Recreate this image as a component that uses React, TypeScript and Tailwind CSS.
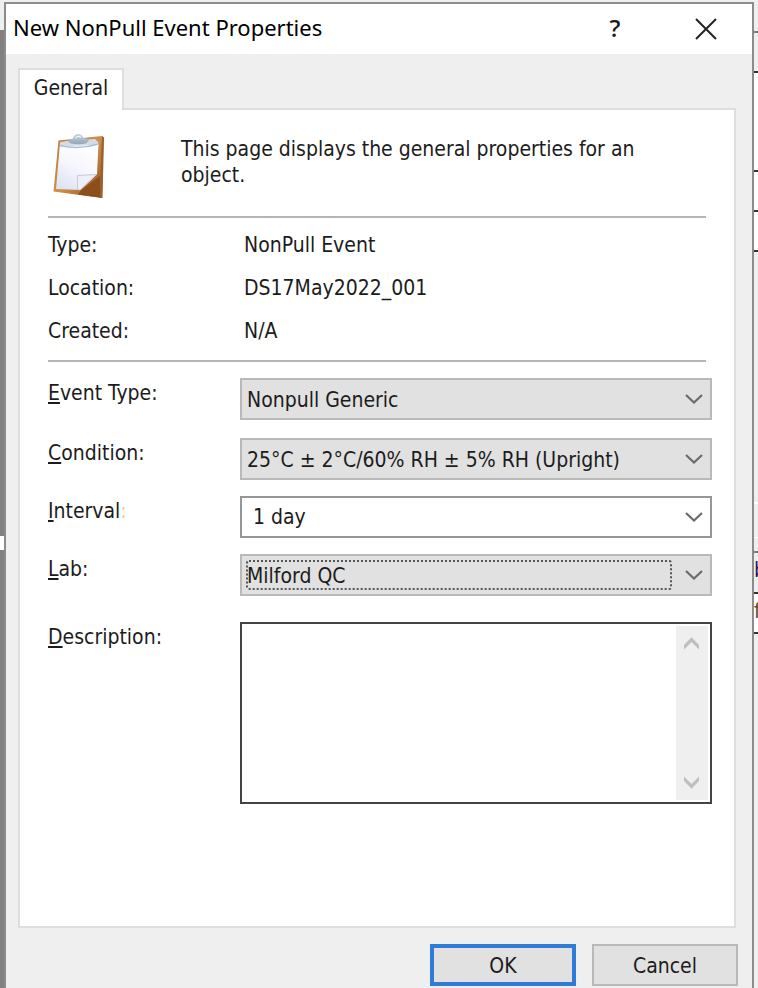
import React from "react";

const textFont = "font-['DejaVu_Sans_Condensed','Noto_Sans',sans-serif]";

function Chevron({ className = "" }: { className?: string }) {
  return (
    <svg
      viewBox="0 0 18 10"
      className={`pointer-events-none h-[10px] w-[18px] ${className}`}
      fill="none"
      stroke="#6b6b6b"
      strokeWidth="2.2"
      aria-hidden="true"
    >
      <path d="M1 1l8 7.5L17 1" />
    </svg>
  );
}

function ScrollArrow({ down = false }: { down?: boolean }) {
  return (
    <svg viewBox="0 0 15 13" className="h-[13px] w-[15px]" fill="#bfbfbf" aria-hidden="true">
      {down ? (
        <path d="M0 0.5L7.5 8L15 0.5V5L7.5 12.8L0 5Z" />
      ) : (
        <path d="M0 12.5L7.5 5L15 12.5V8L7.5 0.2L0 8Z" />
      )}
    </svg>
  );
}

function Clipboard() {
  return (
    <svg viewBox="0 0 54 66" className="h-[66px] w-[54px]" aria-hidden="true">
      <defs>
        <linearGradient id="board" x1="0" y1="0" x2="1" y2="1">
          <stop offset="0" stopColor="#b9793c" />
          <stop offset="0.5" stopColor="#cf8f4c" />
          <stop offset="1" stopColor="#8a4d1c" />
        </linearGradient>
        <linearGradient id="sheet" x1="0.7" y1="0" x2="0.2" y2="1">
          <stop offset="0" stopColor="#ffffff" />
          <stop offset="0.5" stopColor="#f6f6fd" />
          <stop offset="1" stopColor="#dde3f2" />
        </linearGradient>
        <linearGradient id="clip" x1="0" y1="0" x2="0" y2="1">
          <stop offset="0" stopColor="#c9d3de" />
          <stop offset="1" stopColor="#93a5b8" />
        </linearGradient>
      </defs>
      <path d="M6.5 6.500L50 2L51.500 3.500L50 64L1.500 57.500Z" fill="url(#board)" />
      <path d="M50 2L52 3.500L50.500 64L47.500 63.500Z" fill="#9a5f2e" />
      <path d="M48 42L29 56L26 60.500L48 63.500Z" fill="#8c4f1b" />
      <path d="M8 9L46.500 10L45 40L28.500 56L4 55Z" fill="url(#sheet)" />
      <path d="M25.500 41.500L44.500 40.500L28 56L25.500 55.500Z" fill="#eef0f8" stroke="#c6cbd9" strokeWidth="1" />
      <path d="M8 8L18 6.500L43 5L46.500 8.500L46 11L8 12.500Z" fill="#d4dde7" />
      <path d="M8 11.500Q27 16 46.500 10" fill="none" stroke="#a9c2d8" strokeWidth="1.500" />
      <path d="M16 7.500Q18 5 21 4.500Q22 0 26 0Q30 0 31 3.500Q35 4 37 6.500L34 9.500Q26 11 19 9.500Z" fill="url(#clip)" />
      <path d="M23.500 4Q26 1 29 3.500" fill="none" stroke="#eef3f8" strokeWidth="1.300" />
    </svg>
  );
}

function Label({ htmlFor, accel, rest, tail, tailClass = "" }: {
  htmlFor: string;
  accel: string;
  rest: string;
  tail: string;
  tailClass?: string;
}) {
  return (
    <label htmlFor={htmlFor} className="w-48 shrink-0 pt-px leading-7">
      <span className="underline decoration-2 underline-offset-2">{accel}</span>
      {rest}
      <span className={tailClass}>{tail}</span>
    </label>
  );
}

function Select({ id, value, focused = false }: { id: string; value: string; focused?: boolean }) {
  return (
    <div className="relative min-w-0 flex-1">
      <select
        id={id}
        defaultValue={value}
        className="block h-[42px] w-full appearance-none border-2 border-[#b9b9b9] bg-[#e1e1e1] pt-[3px] pr-10 pl-[5px] outline-none"
      >
        <option>{value}</option>
      </select>
      {focused && (
        <span className="pointer-events-none absolute inset-y-[6px] right-10 left-[6px] rounded-[3px] border-2 border-dotted border-[#555]" />
      )}
      <Chevron className="absolute top-4 right-[9px]" />
    </div>
  );
}

function Property({ name, value }: { name: string; value: string }) {
  return (
    <div className="flex leading-7">
      <dt className="w-48 shrink-0">{name}</dt>
      <dd className="pl-1">{value}</dd>
    </div>
  );
}

function LeftEdge() {
  return (
    <div className="flex w-1 shrink-0 flex-col" aria-hidden="true">
      <div className="h-[30px]" />
      <div className="h-[506px] bg-[#808080]" />
      <div className="h-[14px] bg-white" />
      <div className="flex-1 bg-[#808080]" />
    </div>
  );
}

function RightEdge() {
  return (
    <div className="flex w-1 shrink-0 flex-col overflow-hidden" aria-hidden="true">
      <div className="h-[33px] border-b-2 border-[#7d7d7d]" />
      <div className="h-10 border-b-2 border-[#333]" />
      <div className="h-[99px] border-b-2 border-[#333] bg-white" />
      <div className="h-10 border-b-2 border-[#333] bg-white" />
      <div className="h-10 border-b-2 border-[#333] bg-white" />
      <div className="h-[252px] border-b-2 border-white" />
      <div className="h-[34px] border-b border-white" />
      <div className="h-[15px] border-b-2 border-[#7d7d7d]" />
      <div className="h-[41px] overflow-hidden border-b-2 border-[#333] leading-[34px] text-[#2b1b5a]">b</div>
      <div className="h-10 overflow-hidden border-b-2 border-[#333] bg-white leading-[34px] text-[#6b4a1c]">f</div>
    </div>
  );
}

export default function App() {
  return (
    <div className={`flex min-h-screen bg-[#efefef] text-[21px] text-[#1c1c1c] ${textFont}`}>
      <LeftEdge />
      <div
        role="dialog"
        aria-labelledby="dialog-title"
        className="mt-0.5 flex min-w-0 flex-1 flex-col border-2 border-b-0 border-[#8c8c8c] bg-[#efefef]"
      >
        <header className="flex h-[50px] shrink-0 items-center bg-white pl-[7px]">
          <h1 id="dialog-title" className="flex-1 pb-1 font-['Noto_Sans',sans-serif] text-[22px] leading-7 text-black">
            New NonPull Event Properties
          </h1>
          <button type="button" aria-label="Help" className="w-[90px] pb-0.5 font-['Open_Sans',sans-serif] text-2xl font-semibold">
            ?
          </button>
          <button type="button" aria-label="Close" className="flex h-full w-[92px] items-center justify-center">
            <svg viewBox="0 0 22 22" className="size-[22px]" fill="none" stroke="#222" strokeWidth="2" aria-hidden="true">
              <path d="M1 1l20 20M21 1L1 21" />
            </svg>
          </button>
        </header>

        <main className="flex flex-1 flex-col pt-[14px] pr-4 pl-3">
          <div role="tablist" className="flex">
            <button
              type="button"
              role="tab"
              aria-selected="true"
              className="relative -mb-0.5 h-[42px] w-[106px] border-2 border-b-0 border-[#dedede] bg-white pb-0.5"
            >
              General
            </button>
          </div>

          <section className="flex-1 border-2 border-[#dedede] bg-white px-7 pt-6">
            <div className="flex gap-[75px] pl-1">
              <Clipboard />
              <p className="pt-0.5 leading-[26px]">
                This page displays the general properties for an
                <br />
                object.
              </p>
            </div>

            <hr className="mt-4 border-t-2 border-[#b5b5b5]" />
            <dl className="mt-[13px] mb-[15px] flex flex-col gap-[15px]">
              <Property name="Type:" value="NonPull Event" />
              <Property name="Location:" value="DS17May2022_001" />
              <Property name="Created:" value="N/A" />
            </dl>
            <hr className="border-t-2 border-[#b5b5b5]" />

            <form className="-mr-[6px] mt-4 flex flex-col gap-4">
              <div className="mb-0.5 flex">
                <Label htmlFor="event-type" accel="E" rest="vent Type" tail=":" />
                <Select id="event-type" value="Nonpull Generic" />
              </div>
              <div className="flex">
                <Label htmlFor="condition" accel="C" rest="ondition" tail=":" />
                <Select id="condition" value="25°C ± 2°C/60% RH ± 5% RH (Upright)" />
              </div>
              <div className="flex">
                <Label htmlFor="interval" accel="I" rest="nterval" tail=":" tailClass="text-[#ecd09a]" />
                <div className="flex h-[42px] min-w-0 flex-1 border-2 border-[#969696] bg-white">
                  <input id="interval" defaultValue="1 day" className="min-w-0 flex-1 pt-0.5 pl-[11px] outline-none" />
                  <button type="button" aria-label="Show intervals" className="pr-[7px] pl-2">
                    <Chevron />
                  </button>
                </div>
              </div>
              <div className="flex">
                <Label htmlFor="lab" accel="L" rest="ab" tail=":" />
                <Select id="lab" value="Milford QC" focused />
              </div>
              <div className="mt-[10px] flex">
                <Label htmlFor="description" accel="D" rest="escription" tail=":" />
                <div className="flex h-[182px] min-w-0 flex-1 border-2 border-[#444] bg-white p-0.5">
                  <textarea id="description" className="min-w-0 flex-1 resize-none outline-none" />
                  <div className="flex w-8 flex-col items-center justify-between bg-[#efefef] py-[11px] pr-0.5">
                    <button type="button" aria-label="Scroll up">
                      <ScrollArrow />
                    </button>
                    <button type="button" aria-label="Scroll down">
                      <ScrollArrow down />
                    </button>
                  </div>
                </div>
              </div>
            </form>
          </section>
        </main>

        <footer className="flex justify-end gap-4 pt-4 pr-[14px] pb-0.5">
          <button type="button" className="h-[42px] w-[146px] border-4 border-[#2f7bd6] bg-[#e1e1e1] pt-[3px]">
            OK
          </button>
          <button type="button" className="h-[42px] w-[146px] border-2 border-[#b9b9b9] bg-[#e1e1e1] pt-[3px]">
            Cancel
          </button>
        </footer>
      </div>
      <RightEdge />
    </div>
  );
}
